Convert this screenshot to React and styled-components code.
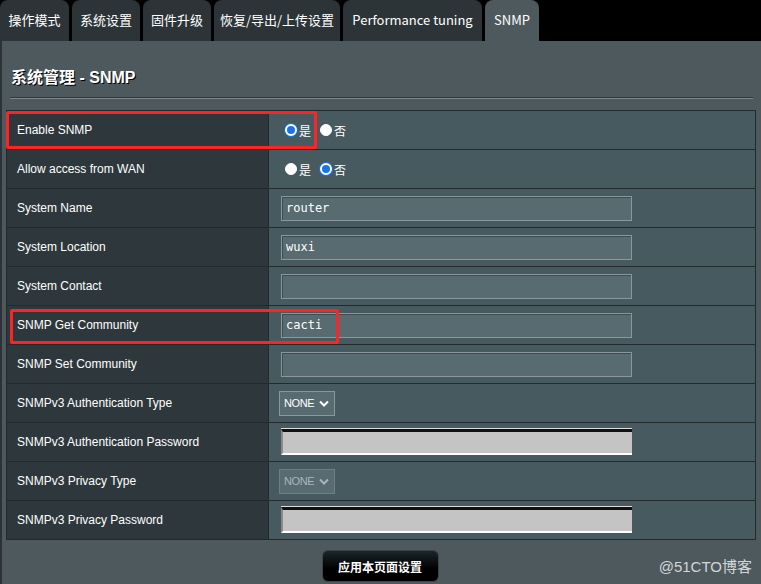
import styled, { createGlobalStyle } from 'styled-components'

const GlobalStyle = createGlobalStyle`
  html, body {
    margin: 0;
    padding: 0;
    background: #000;
    height: 100%;
  }
  #root {
    height: 100%;
  }
`;

const tabs = [
  { label: '操作模式', width: 69 },
  { label: '系统设置', width: 68 },
  { label: '固件升级', width: 68 },
  { label: '恢复/导出/上传设置', width: 126 },
  { label: 'Performance tuning', width: 139 },
  { label: 'SNMP', width: 54, active: true },
];

const rows = [
  { label: 'Enable SNMP', type: 'radio', value: 'yes' },
  { label: 'Allow access from WAN', type: 'radio', value: 'no' },
  { label: 'System Name', type: 'text', value: 'router' },
  { label: 'System Location', type: 'text', value: 'wuxi' },
  { label: 'System Contact', type: 'text', value: '' },
  { label: 'SNMP Get Community', type: 'text', value: 'cacti' },
  { label: 'SNMP Set Community', type: 'text', value: '' },
  { label: 'SNMPv3 Authentication Type', type: 'select' },
  { label: 'SNMPv3 Authentication Password', type: 'password' },
  { label: 'SNMPv3 Privacy Type', type: 'select', disabled: true },
  { label: 'SNMPv3 Privacy Password', type: 'password' },
];

const Radio = ({ checked, children }) => (
  <RadioItem>
    <Dot checked={checked} />
    <span>{children}</span>
  </RadioItem>
);

const Chevron = ({ faded }) => (
  <svg width="10" height="7" viewBox="0 0 10 7">
    <path d="M1 1.5 L5 5.5 L9 1.5" fill="none" stroke={faded ? '#aab6ba' : '#fff'} strokeWidth="2" />
  </svg>
);

const renderField = (row) => {
  if (row.type === 'radio') {
    return (
      <RadioGroup>
        <Radio checked={row.value === 'yes'}>是</Radio>
        <Radio checked={row.value === 'no'}>否</Radio>
      </RadioGroup>
    );
  }
  if (row.type === 'select') {
    return (
      <Select disabled={row.disabled}>
        <span>NONE</span>
        <Chevron faded={row.disabled} />
      </Select>
    );
  }
  if (row.type === 'password') return <PasswordBox />;
  return <TextBox>{row.value}</TextBox>;
};

const App = () => (
  <Page>
    <GlobalStyle />
    <TabBar>
      {tabs.map((t) => (
        <Tab key={t.label} width={t.width} active={t.active}>{t.label}</Tab>
      ))}
    </TabBar>
    <Panel>
      <Title>系统管理 - SNMP</Title>
      <Divider />
      <Table>
        <tbody>
          {rows.map((r) => (
            <tr key={r.label}>
              <Label>{r.label}</Label>
              <Field>{renderField(r)}</Field>
            </tr>
          ))}
        </tbody>
      </Table>
      <Footer>
        <ApplyButton>应用本页面设置</ApplyButton>
      </Footer>
      <Highlight style={{ left: 4, top: 70, width: 305, height: 32 }} />
      <Highlight style={{ left: 8, top: 268, width: 323, height: 29 }} />
      <Watermark>@51CTO博客</Watermark>
    </Panel>
  </Page>
);

export default App

const Page = styled.div`
  width: 761px;
  height: 584px;
  display: flex;
  flex-direction: column;
  background: #000;
  overflow: hidden;
`;

const TabBar = styled.div`
  display: flex;
  gap: 3px;
  height: 41px;
  flex-shrink: 0;
`;

const Tab = styled.div`
  width: ${(p) => p.width}px;
  height: 41px;
  box-sizing: border-box;
  display: flex;
  align-items: center;
  justify-content: center;
  padding-bottom: 2px;
  border-radius: 8px 8px 0 0;
  background: ${(p) => (p.active ? '#4e595d' : '#2c3438')};
  color: #fff;
  font-family: "Noto Sans CJK SC", "Liberation Sans", sans-serif;
  font-size: 13px;
  white-space: nowrap;
`;

const Panel = styled.div`
  position: relative;
  flex: 1;
  background: #4e595d;
  border-left: 2px solid #2b3337;
  padding: 25px 5px 0 4px;
  font-family: "Liberation Sans", Arial, sans-serif;
`;

const Title = styled.div`
  padding-left: 5px;
  font-family: "Liberation Sans", "Noto Sans CJK SC", sans-serif;
  font-size: 16px;
  font-weight: bold;
  line-height: 24px;
  color: #fff;
  text-shadow: 1px 1px 0 #000;
`;

const Divider = styled.div`
  margin: 7px 3px 11px 4px;
  height: 1px;
  background: #7d898d;
  border-top: 1px solid #2e3639;
`;

const Table = styled.table`
  width: 750px;
  border-collapse: collapse;
  border: 1px solid #222a2d;
`;

const Label = styled.td`
  width: 262px;
  height: 39px;
  padding: 0 0 0 10px;
  background: #2e383c;
  border: 1px solid #222a2d;
  color: #fff;
  font-size: 12px;
  box-sizing: border-box;
`;

const Field = styled.td`
  height: 39px;
  padding: 0 0 0 10px;
  background: #475a5f;
  border: 1px solid #222a2d;
  box-sizing: border-box;
`;

const RadioGroup = styled.div`
  display: flex;
  gap: 9px;
  padding-left: 6px;
`;

const RadioItem = styled.label`
  display: flex;
  align-items: center;
  gap: 2px;
  color: #fff;
  font-family: "Noto Sans CJK SC", sans-serif;
  font-size: 12px;
`;

const Dot = styled.span`
  width: 12px;
  height: 12px;
  box-sizing: border-box;
  border-radius: 50%;
  background: ${(p) => (p.checked ? '#1a74e8' : '#fff')};
  border: ${(p) => (p.checked ? '2px solid #fff' : '1px solid #fff')};
  box-shadow: ${(p) => (p.checked ? '0 0 0 1px #1a74e8' : 'none')};
`;

const TextBox = styled.div`
  width: 351px;
  height: 25px;
  box-sizing: border-box;
  margin-left: 2px;
  padding: 0 4px;
  display: flex;
  align-items: center;
  background: #576b71;
  border: 1px solid #8a979b;
  box-shadow: inset 1px 1px 0 #3e4c50;
  color: #fff;
  font-family: "DejaVu Sans Mono", "Liberation Mono", monospace;
  font-size: 12px;
`;

const Select = styled.div`
  width: 56px;
  height: 25px;
  box-sizing: border-box;
  display: flex;
  align-items: center;
  justify-content: space-between;
  padding: 0 5px 0 4px;
  background: #576b71;
  border: 1px solid ${(p) => (p.disabled ? '#6e7f84' : '#8a979b')};
  color: ${(p) => (p.disabled ? '#aab6ba' : '#fff')};
  font-size: 11px;
  letter-spacing: -0.4px;
`;

const PasswordBox = styled.div`
  width: 351px;
  height: 26px;
  box-sizing: border-box;
  margin-left: 2px;
  background: #c4c4c4;
  border-top: 3px solid #111;
  border-left: 2px solid #8a8a8a;
  border-bottom: 2px solid #fff;
  box-shadow: 0 -1px 0 #ddd;
`;

const Footer = styled.div`
  display: flex;
  justify-content: center;
  padding-top: 10px;
  padding-right: 2px;
`;

const ApplyButton = styled.div`
  width: 117px;
  height: 32px;
  box-sizing: border-box;
  display: flex;
  align-items: center;
  justify-content: center;
  border-radius: 6px;
  border: 1px solid #3b4649;
  background: linear-gradient(#1c2629, #000 60%);
  color: #fff;
  font-family: "Noto Sans CJK SC", sans-serif;
  font-size: 12px;
  font-weight: bold;
`;

const Highlight = styled.div`
  position: absolute;
  border: 3px solid #ff2424;
  border-radius: 2px;
  pointer-events: none;
`;

const Watermark = styled.div`
  position: absolute;
  right: 9px;
  bottom: 8px;
  color: #d2d6d7;
  font-family: "Liberation Sans", "Noto Sans CJK SC", sans-serif;
  font-size: 15px;
`;
